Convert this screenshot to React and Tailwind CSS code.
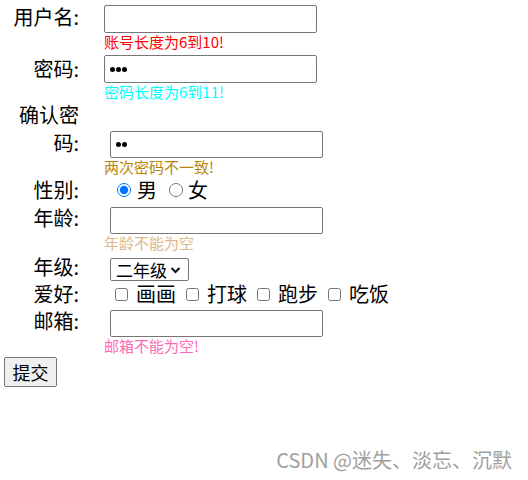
import React from "react";

const font = { fontFamily: '"Noto Sans CJK SC", "Noto Sans", sans-serif' };

function Label({ children, className = "" }) {
  return (
    <div className={`w-[79px] shrink-0 text-right text-[20px] text-black ${className}`}>
      {children}
    </div>
  );
}

function TextBox({ dots = 0, className = "" }) {
  return (
    <div
      className={`flex w-[213px] items-center gap-[1px] rounded-[2px] border border-[#767676] bg-white pl-[5px] ${className}`}
    >
      {Array.from({ length: dots }).map((_, i) => (
        <span key={i} className="block h-[5px] w-[5px] rounded-full bg-black" />
      ))}
    </div>
  );
}

function Err({ color, children }) {
  return (
    <div className={`text-[15px] leading-[18px] whitespace-nowrap ${color}`}>{children}</div>
  );
}

function Check({ label }) {
  return (
    <label className="flex items-center">
      <input type="checkbox" className="m-0 h-[13px] w-[13px]" />
      <span className="ml-[8px] text-[20px] leading-[26px]">{label}</span>
    </label>
  );
}

export default function App() {
  return (
    <div className="relative h-[480px] w-[528px] overflow-hidden bg-white text-black" style={font}>
      {/* username */}
      <div className="flex h-[51px] items-start">
        <Label className="mt-[4px] leading-[26px]">用户名:</Label>
        <div className="ml-[25px] flex flex-col">
          <TextBox className="mt-[5px] h-[28px]" />
          <Err color="text-[#ff0000]">账号长度为6到10!</Err>
        </div>
      </div>

      {/* password */}
      <div className="flex h-[50px] items-start">
        <Label className="mt-[5px] leading-[26px]">密码:</Label>
        <div className="ml-[25px] flex flex-col">
          <TextBox dots={3} className="mt-[4px] h-[28px]" />
          <Err color="text-[#00ffff]">密码长度为6到11!</Err>
        </div>
      </div>

      {/* confirm */}
      <div className="flex h-[75px] items-start">
        <Label className="leading-[28px]">
          确认密
          <br />
          码:
        </Label>
        <div className="ml-[25px] flex flex-col">
          <TextBox dots={2} className="ml-[6px] mt-[30px] h-[27px]" />
          <Err color="text-[#b8860b]">两次密码不一致!</Err>
        </div>
      </div>

      {/* gender */}
      <div className="flex h-[28px] items-start">
        <Label className="mt-[1px] leading-[26px]">性别:</Label>
        <div className="ml-[38px] flex h-[28px] items-center text-[20px] leading-[26px]">
          <input type="radio" name="sex" defaultChecked className="m-0 h-[14px] w-[14px] accent-[#0075ff]" />
          <span className="ml-[6px]">男</span>
          <input type="radio" name="sex" className="m-0 ml-[12px] h-[14px] w-[14px]" />
          <span className="ml-[5px]">女</span>
        </div>
      </div>

      {/* age */}
      <div className="flex h-[48px] items-start">
        <Label className="mt-[1px] leading-[26px]">年龄:</Label>
        <div className="ml-[25px] flex flex-col">
          <TextBox className="ml-[6px] mt-[3px] h-[27px]" />
          <Err color="text-[#deb887]">年龄不能为空</Err>
        </div>
      </div>

      {/* grade */}
      <div className="flex h-[29px] items-start">
        <Label className="mt-[2px] leading-[26px]">年级:</Label>
        <div className="ml-[31px] mt-[6px] flex h-[23px] w-[79px] items-center rounded-[2px] border border-[#767676] bg-white pl-[5px] text-[17px]">
          <span className="leading-[20px]">二年级</span>
          <svg className="ml-[3px]" width="11" height="8" viewBox="0 0 11 8">
            <path d="M1.5 2 L5.5 6 L9.5 2" fill="none" stroke="#111" strokeWidth="2" />
          </svg>
        </div>
      </div>

      {/* hobby */}
      <div className="flex h-[26px] items-start">
        <Label className="leading-[25px]">爱好:</Label>
        <div className="ml-[36px] flex h-[26px] items-center gap-[10px]">
          <Check label="画画" />
          <Check label="打球" />
          <Check label="跑步" />
          <Check label="吃饭" />
        </div>
      </div>

      {/* email */}
      <div className="flex h-[48px] items-start">
        <Label className="mt-[1px] leading-[25px]">邮箱:</Label>
        <div className="ml-[25px] flex flex-col">
          <TextBox className="ml-[6px] mt-[3px] h-[27px]" />
          <Err color="text-[#ff69b4]">邮箱不能为空!</Err>
        </div>
      </div>

      <button className="ml-[4px] mt-[2px] flex h-[30px] w-[53px] items-center justify-center rounded-[2px] border border-[#767676] bg-[#efefef] text-[18px] text-black">
        提交
      </button>

      <div className="absolute right-[16px] top-[447px] text-[20px] leading-[26px] text-[#a0a0a0]">
        CSDN @迷失、淡忘、沉默
      </div>
    </div>
  );
}
